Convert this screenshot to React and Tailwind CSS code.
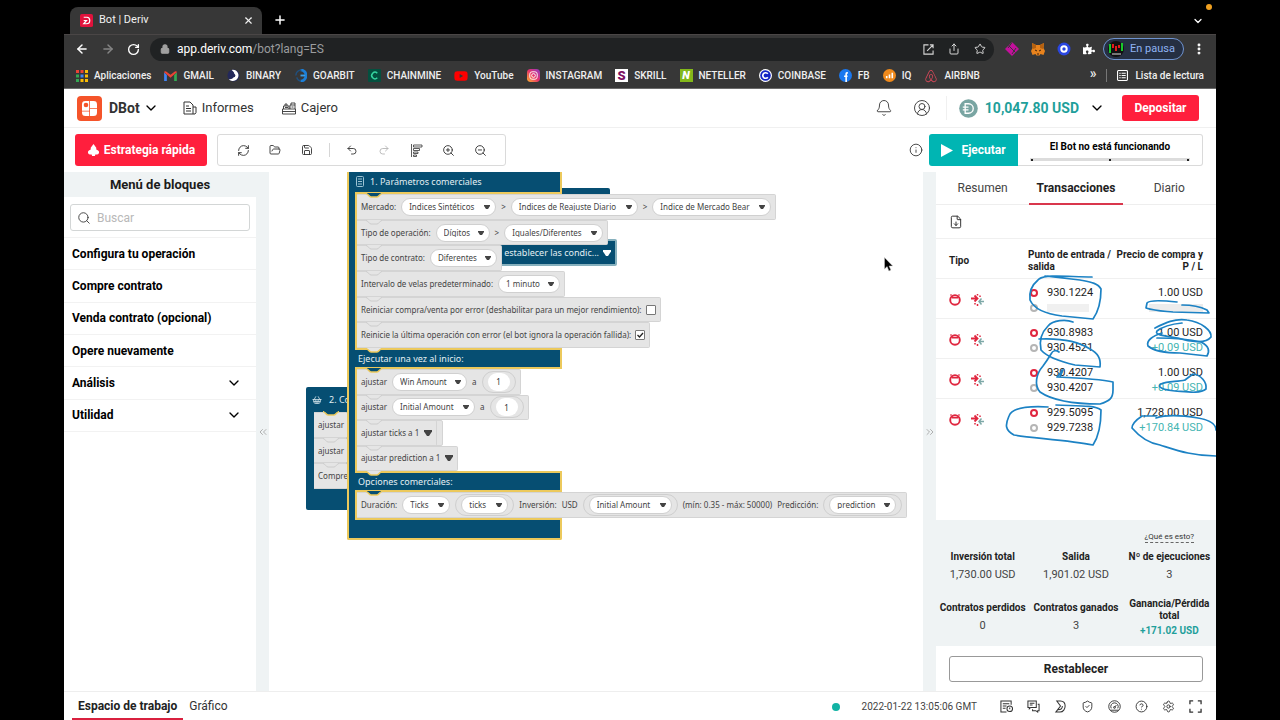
import React from "react";
import {
  ArrowLeft, ArrowRight, RotateCw, Lock, X, Plus, ChevronDown, ChevronsLeft, ChevronsRight,
  Share, Star, EllipsisVertical, Bell, CircleUserRound, Info, Play, RefreshCw, FolderOpen, Save, Undo2, Redo2,
  ZoomIn, ZoomOut, Search, FileDown, ShieldCheck, CircleHelp, Settings, Maximize, ShoppingBasket,
} from "lucide-react";
import { FaPuzzlePiece, FaYoutube, FaAirbnb } from "react-icons/fa";

/* ---------- browser chrome ---------- */

function TabStrip() {
  return (
    <div className="relative flex h-[34px] items-end bg-black pl-[6px]">
      <div className="flex h-[27px] w-[192px] items-center rounded-t-lg bg-[#373737] pl-[10px] pr-2 text-[11px] text-[#f1f1f1]">
        <svg viewBox="0 0 14 14" className="mr-[6px] h-[13px] w-[13px]">
          <rect width="14" height="14" rx="2" fill="#e0123c" />
          <path d="M4 3.500h3.500c2 0 3 1.500 3 3.500s-1.500 3.500-3.500 3.500H4l3-3.500H4" fill="none" stroke="#fff" strokeWidth="1.300" />
        </svg>
        <span className="flex-1">Bot | Deriv</span>
        <button aria-label="Cerrar pestaña"><X className="h-[11px] w-[11px]" strokeWidth={2.5} /></button>
      </div>
      <button aria-label="Nueva pestaña" className="mb-[7px] ml-[11px] text-white"><Plus className="h-[14px] w-[14px]" strokeWidth={2.5} /></button>
      <button aria-label="Buscar pestañas" className="mb-[7px] ml-auto mr-3 text-white"><ChevronDown className="h-3 w-3" strokeWidth={2.5} /></button>
      <span className="absolute right-1 top-1 h-[6px] w-[6px] rounded-full bg-[#f0a020]" />
    </div>
  );
}

function AddressBar() {
  return (
    <div className="flex h-[29px] items-center border-t border-[#4a4646] bg-[#373737] pl-[11px] pr-[10px] text-white">
      <button aria-label="Atrás"><ArrowLeft className="h-[14px] w-[14px]" strokeWidth={2.5} /></button>
      <button aria-label="Adelante" className="ml-3 text-[#858585]"><ArrowRight className="h-[14px] w-[14px]" strokeWidth={2.5} /></button>
      <button aria-label="Recargar" className="ml-3"><RotateCw className="h-[13px] w-[13px]" strokeWidth={2.5} /></button>
      <div className="ml-[10px] flex h-[23px] flex-1 items-center rounded-full bg-[#202223] pl-[10px] pr-2">
        <Lock className="mr-[7px] h-[10px] w-[10px] fill-[#a0a0a0] text-[#a0a0a0]" strokeWidth={2.5} />
        <a href="#url" className="flex-1 text-[12px] text-[#9a9c9e]"><span className="text-white">app.deriv.com</span>/bot?lang=ES</a>
        <div className="flex items-center gap-[14px] text-[#d6d6d6]">
          <button aria-label="Abrir"><svg viewBox="0 0 12 12" className="h-[11px] w-[11px]" fill="none" stroke="currentColor" strokeWidth="1.200"><path d="M6 1H1v10h10V7M7.500 1H11v3.500M11 1 4.500 7.500" /></svg></button>
          <button aria-label="Compartir"><Share className="h-[12px] w-[12px]" /></button>
          <button aria-label="Favorito"><Star className="h-[12px] w-[12px]" /></button>
        </div>
      </div>
      <div className="ml-[11px] flex items-center gap-3">
        <svg viewBox="0 0 14 14" className="h-[14px] w-[14px]"><path d="M7 0l7 7-7 7-7-7z" fill="#c4109c" /><path d="M3.500 3.500l7 7M7 .500 3 6M11 6 7 12" stroke="#373737" strokeWidth="1" /></svg>
        <svg viewBox="0 0 14 14" className="h-[14px] w-[14px]">
          <path d="M1 1l4 2h4l4-2-.500 5L14 9l-1.500 4-3-1-1 1.500h-3L4.500 12l-3 1L0 9l1.500-3z" fill="#e8831d" />
          <path d="M1 1l4 2v3L2 7z" fill="#b5600f" /><path d="M13 1L9 3v3l3 1z" fill="#b5600f" /><path d="M4 8l2 1M10 8 8 9M6 12h2" stroke="#40220a" />
        </svg>
        <svg viewBox="0 0 14 14" className="h-[14px] w-[14px]"><circle cx="7" cy="7" r="6.500" fill="#2a46e0" /><circle cx="7" cy="7" r="2.700" fill="none" stroke="#fff" strokeWidth="2" /></svg>
        <FaPuzzlePiece className="h-3 w-3" />
      </div>
      <button className="ml-2 flex h-[22px] items-center rounded-full border border-[#6f93cf] bg-[#252f42] pl-1 pr-2 text-[11px] text-[#8fb3f2]">
        <svg viewBox="0 0 16 16" className="mr-[6px] h-4 w-4"><circle cx="8" cy="8" r="8" fill="#111" /><path d="M2 3v9M14 2v8" stroke="#18c92a" strokeWidth="2" /><path d="M5 3v4M8 5v5M11 4v3" stroke="#e21b1b" strokeWidth="2" /><path d="M4 13h9" stroke="#ddd" /></svg>
        En pausa
      </button>
      <button aria-label="Menú" className="ml-2"><EllipsisVertical className="h-[14px] w-[14px]" strokeWidth={3} /></button>
    </div>
  );
}

const bookmarks = [
  ["Aplicaciones", <svg viewBox="0 0 12 12" className="h-3 w-3"><path d="M0 0h3v3H0zM4.500 0h3v3h-3z" fill="#ea4335" /><path d="M9 0h3v3H9zM9 4.500h3v3H9z" fill="#fbbc04" /><path d="M0 4.500h3v3H0zM0 9h3v3H0z" fill="#34a853" /><path d="M4.500 4.500h3v3h-3z" fill="#4285f4" /><path d="M4.500 9h3v3h-3zM9 9h3v3H9z" fill="#fbbc04" /></svg>],
  ["GMAIL", <svg viewBox="0 0 14 11" className="h-[10px] w-[13px]"><path d="M0 1.500V11h3V4.500z" fill="#4285f4" /><path d="M14 1.500V11h-3V4.500z" fill="#34a853" /><path d="M0 1.500C0 0 2 0 3 1l4 3 4-3c1-1 3-1 3 .500L7 7.500z" fill="#ea4335" /></svg>],
  ["BINARY", <svg viewBox="0 0 14 14" className="h-[13px] w-[13px]"><circle cx="7" cy="7" r="6.500" fill="#23285a" /><path d="M5 1a6 6 0 1 1-3 10 5 5 0 0 0 6-5C8 3 6 2 5 1z" fill="#fff" /><circle cx="7" cy="7" r="2" fill="#23285a" /></svg>],
  ["GOARBIT", <svg viewBox="0 0 14 14" className="h-[13px] w-[13px]" fill="none"><path d="M7 1a6 6 0 0 1 0 12" stroke="#1c7fd6" strokeWidth="3" /><path d="M8 1a6 6 0 0 0-6 6M3 9a5 5 0 0 0 4 4" stroke="#20507f" strokeWidth="1.500" /><path d="M7 7h5" stroke="#3aa0e8" strokeWidth="2" /></svg>],
  ["CHAINMINE", <svg viewBox="0 0 14 14" className="h-[13px] w-[13px]"><rect width="14" height="14" rx="1" fill="#04503f" /><path d="M10 4.500A3.500 3.500 0 1 0 10 9.500" fill="none" stroke="#35d6a0" strokeWidth="1.600" /></svg>],
  ["YouTube", <FaYoutube className="h-[14px] w-[14px] text-[#f00]" />],
  ["INSTAGRAM", <svg viewBox="0 0 14 14" className="h-[13px] w-[13px]"><defs><linearGradient id="ig" x1="0" y1="1" x2="1" y2="0"><stop offset="0" stopColor="#fdb52e" /><stop offset=".500" stopColor="#e8326a" /><stop offset="1" stopColor="#8a3ac8" /></linearGradient></defs><rect width="14" height="14" rx="4" fill="url(#ig)" /><rect x="3" y="3" width="8" height="8" rx="2.500" fill="none" stroke="#fff" /><circle cx="7" cy="7" r="2" fill="none" stroke="#fff" /></svg>],
  ["SKRILL", <span className="flex h-[13px] w-[13px] items-center justify-center bg-white text-[13px] font-black leading-none text-[#7c0f63]">S</span>],
  ["NETELLER", <span className="flex h-[13px] w-[13px] items-center justify-center bg-[#83b81a] text-[11px] font-black italic leading-none text-white">N</span>],
  ["COINBASE", <svg viewBox="0 0 14 14" className="h-[13px] w-[13px]"><circle cx="7" cy="7" r="7" fill="#fff" /><circle cx="7" cy="7" r="5.700" fill="#1224c4" /><path d="M9.500 5.200A3 3 0 1 0 9.500 8.800" fill="none" stroke="#fff" strokeWidth="1.800" /></svg>],
  ["FB", <svg viewBox="0 0 14 14" className="h-[13px] w-[13px]"><circle cx="7" cy="7" r="7" fill="#1a78f0" /><path d="M9.500 4.200H8.600C8 4.200 7.700 4.600 7.700 5.200V14M5.500 7.800h3.700" fill="none" stroke="#fff" strokeWidth="1.700" /></svg>],
  ["IQ", <svg viewBox="0 0 14 14" className="h-[13px] w-[13px]"><circle cx="7" cy="7" r="7" fill="#f08a1c" /><path d="M4 10V7.500M7 10V6M10 10V4" stroke="#fff" strokeWidth="1.700" /></svg>],
  ["AIRBNB", <FaAirbnb className="h-[14px] w-[14px] text-[#d8485a]" />],
];

function Bookmarks() {
  return (
    <nav className="flex h-[26px] items-center border-b border-[#6b6b6b] bg-[#373737] pl-3 pr-3 text-[10px] font-medium text-[#efefef]">
      <div className="flex items-center gap-[13px]">
        {bookmarks.map(([name, icon]) => (
          <a href="#b" key={name} className="flex items-center gap-[6px] whitespace-nowrap">{icon}{name}</a>
        ))}
      </div>
      <span className="ml-auto pb-[5px] text-[14px] leading-none">»</span>
      <span className="mx-[10px] h-[13px] w-px bg-[#777]" />
      <a href="#l" className="flex items-center gap-[7px] whitespace-nowrap">
        <svg viewBox="0 0 12 12" className="h-[11px] w-[11px]" fill="none" stroke="#fff" strokeWidth="1.200"><rect x=".600" y=".600" width="10.800" height="10.800" rx="1" /><path d="M2.500 3.500h1.500M5 3.500h4.500M2.500 6h1.500M5 6h4.500M2.500 8.500h1.500M5 8.500h4.500" /></svg>
        Lista de lectura
      </a>
    </nav>
  );
}

/* ---------- app header ---------- */

function Header() {
  return (
    <header className="flex h-[39px] items-center border-b border-[#f0f0f0] pl-[13px] pr-[17px] text-[#333]">
      <button className="flex items-center text-[14px] font-bold">
        <svg viewBox="0 0 25 25" className="mr-[7px] h-[25px] w-[25px]">
          <rect width="25" height="25" rx="4" fill="#f5542a" />
          <path d="M8.500 5h3.700v9.700H5V8.500C5 6 6 5 8.500 5zM13 5h3.500C19 5 20 6 20 8.500v3.700h-7zM13 13h7v3.500c0 2.500-1 3.500-3.500 3.500H13zM5 15.500h7.200V20H8.500C6 20 5 19 5 16.500z" fill="#fff" />
          <circle cx="9" cy="9" r="2.300" fill="#f5542a" />
        </svg>
        DBot
        <ChevronDown className="ml-[3px] h-4 w-4 text-black" />
      </button>
      <a href="#i" className="ml-6 flex items-center gap-[5px] text-[13px]">
        <svg viewBox="0 0 14 14" className="h-[14px] w-[14px]" fill="none" stroke="currentColor"><path d="M1 1h6l3 3v9H1zM10 6h3v5.500L12 13h-2M3 5h3M3 7.500h5M3 10h5" /></svg>
        Informes
      </a>
      <a href="#c" className="ml-7 flex items-center gap-[5px] text-[13px]">
        <svg viewBox="0 0 14 14" className="h-[14px] w-[14px]" fill="none" stroke="currentColor"><path d="M.500 8h13v5H.500zM1.500 8V5h5.500v3M8 8V4h5v4M9 4V2h4v2M3 5V3h2v2M.500 10.500h13M3 6.500h3M9.500 6h2" strokeWidth=".900" /></svg>
        Cajero
      </a>
      <div className="ml-auto flex items-center">
        <button aria-label="Notificaciones"><Bell className="h-[18px] w-[18px] text-[#444]" strokeWidth={1.3} /></button>
        <button aria-label="Cuenta" className="ml-5"><CircleUserRound className="h-[18px] w-[18px] text-[#444]" strokeWidth={1.3} /></button>
        <span className="ml-[15px] h-6 w-px bg-[#f0f0f0]" />
        <button className="ml-3 flex items-center text-[14px] font-bold text-[#1f9f9b]">
          <svg viewBox="0 0 20 20" className="mr-[7px] h-[19px] w-[19px]"><circle cx="10" cy="10" r="9.800" fill="#79a5a2" /><path d="M6.500 5H10a5 5 0 0 1 0 10H6.500zM4 8.500h6M4 11.500h6" fill="none" stroke="#fff" strokeWidth="1.400" /></svg>
          10,047.80 USD
          <ChevronDown className="ml-[10px] h-4 w-4 text-black" />
        </button>
        <button className="ml-[17px] h-[26px] w-[77px] rounded-[3px] bg-[#ff1f3d] text-[12px] font-bold text-white">Depositar</button>
      </div>
    </header>
  );
}

function ToolBtn({ label, children, muted }) {
  return <button aria-label={label} className={"flex w-8 justify-center " + (muted ? "text-[#b5b5b5]" : "text-[#333]")}>{children}</button>;
}

function Toolbar() {
  const ic = "h-[13px] w-[13px]";
  return (
    <div className="flex h-[44px] items-center pl-[11px] pr-[13px]">
      <button className="flex h-8 w-[132px] items-center justify-center gap-1 rounded-[3px] bg-[#ff1f3d] text-[12px] font-bold text-white">
        <svg viewBox="0 0 14 13" className="h-3 w-[13px]" fill="#fff"><path d="M7 0l3 4v2l2 1a2.500 2.500 0 0 1-1 4.500H9L8.500 13h-3L5 11.500H3A2.500 2.500 0 0 1 2 7l2-1V4z" /></svg>
        Estrategia rápida
      </button>
      <div className="ml-[10px] flex h-8 items-center rounded-[3px] border border-[#dadada] px-[9px]">
        <ToolBtn label="Reiniciar"><RefreshCw className={ic} strokeWidth={1.7} /></ToolBtn>
        <ToolBtn label="Importar"><FolderOpen className="h-3 w-3" strokeWidth={1.8} /></ToolBtn>
        <ToolBtn label="Guardar"><Save className="h-3 w-3" strokeWidth={1.8} /></ToolBtn>
        <span className="mx-[6px] h-[14px] w-px bg-[#d6d6d6]" />
        <ToolBtn label="Deshacer"><Undo2 className="h-3 w-3" strokeWidth={1.8} /></ToolBtn>
        <ToolBtn label="Rehacer" muted><Redo2 className="h-3 w-3" strokeWidth={1.8} /></ToolBtn>
        <ToolBtn label="Ordenar"><svg viewBox="0 0 13 13" className={ic} fill="none" stroke="currentColor" strokeWidth=".800"><path d="M1.500 0v13M3.500 1h8.500v2H3.500zM3.500 4.500h6v2h-6zM3.500 8h4.500v1.500H3.500zM3.500 11h3v1.500h-3z" /></svg></ToolBtn>
        <ToolBtn label="Acercar"><ZoomIn className={ic} strokeWidth={1.7} /></ToolBtn>
        <ToolBtn label="Alejar"><ZoomOut className={ic} strokeWidth={1.7} /></ToolBtn>
      </div>
      <button aria-label="Información" className="ml-auto mr-[6px]"><Info className="h-[14px] w-[14px] text-[#333]" strokeWidth={1.5} /></button>
      <button className="flex h-8 w-[89px] items-center justify-center gap-2 rounded-l-[3px] bg-[#00b5b3] text-[12px] font-bold text-white">
        <svg viewBox="0 0 12 13" className="h-[13px] w-3"><path d="M0 0l12 6.500L0 13z" fill="#fff" /></svg>Ejecutar
      </button>
      <div className="flex h-8 w-[185px] flex-col items-center rounded-r-[3px] border border-l-0 border-[#dadada] px-3 pt-[5px]">
        <span className="text-[10px] font-bold leading-[13px] text-black">El Bot no está funcionando</span>
        <div className="mt-[5px] flex h-[3px] w-full items-center justify-between bg-[#dcdcdc] px-px">
          <i className="h-[2px] w-[2px] bg-[#222]" /><i className="h-[2px] w-[2px] bg-[#222]" /><i className="h-[2px] w-[2px] bg-[#222]" />
        </div>
      </div>
    </div>
  );
}

/* ---------- toolbox ---------- */

const categories = [
  ["Configura tu operación", false], ["Compre contrato", false], ["Venda contrato (opcional)", false],
  ["Opere nuevamente", false], ["Análisis", true], ["Utilidad", true],
];

function Sidebar() {
  return (
    <aside className="w-48 shrink-0">
      <h2 className="flex h-[25px] items-center justify-center bg-[#eff3f4] text-[13px] font-bold text-[#1c1c1c]">Menú de bloques</h2>
      <div className="px-[6px] pb-[6px] pt-[7px]">
        <label className="flex h-[27px] items-center rounded-[3px] border border-[#d3d6d6] px-[6px]">
          <Search className="h-[14px] w-[14px] shrink-0 text-[#333]" strokeWidth={1.5} />
          <input aria-label="Buscar" placeholder="Buscar" className="ml-[6px] w-full text-[12px] outline-none placeholder:text-[#b8b8b8]" />
        </label>
      </div>
      <ul className="flex h-[195px] flex-col border-t border-[#f2f2f2]">
        {categories.map(([name, open]) => (
          <li key={name} className="flex flex-1 border-b border-[#f2f2f2]">
            <button className="flex w-full items-center justify-between pl-2 pr-[14px] text-[12px] font-bold text-black">
              {name}{open && <ChevronDown className="h-4 w-4" />}
            </button>
          </li>
        ))}
      </ul>
    </aside>
  );
}

/* ---------- workspace blocks ---------- */

function Notch({ fill = "#e5e5e5", stroke = "#cccccc", width = "1", place = "-top-px left-2" }) {
  return (
    <svg viewBox="0 0 18 6" className={"absolute h-[6px] w-[18px] " + place} fill={fill} stroke={stroke} strokeWidth={width}>
      <path d="M1 .500c2 0 3 3.500 5 3.500h6c2 0 3-3.500 5-3.500" />
      <path d="M2.500 0h13" stroke={fill} strokeWidth="2" />
    </svg>
  );
}
const topNotch = <Notch fill="#064e72" stroke="#ecc95c" width="1.500" place="-top-[2px] left-2" />;
const barNotch = <Notch stroke="#ecc95c" width="1.500" place="-top-[2px] left-[10px]" />;
const plainNotch = <Notch />;

function Row({ children, top, size = "w-max pr-1" }) {
  return (
    <div className={"relative flex flex-1 items-center gap-[5px] whitespace-nowrap rounded-r-[2px] border-y border-r border-[#d4d4d4] bg-[#e5e5e5] pl-1 text-[8px] leading-none text-[#444] " + size}>
      {top ? topNotch : plainNotch}
      {children}
    </div>
  );
}

function Pill({ value, label, width }) {
  return (
    <span className={"relative flex h-[18px] shrink-0 " + width}>
      <select aria-label={label} defaultValue={value} className="w-full appearance-none rounded-full border border-[#d0d0d0] bg-white pl-[7px] text-[8px] text-[#444]">
        <option>{value}</option>
      </select>
      <svg viewBox="0 0 6 4" className="pointer-events-none absolute right-[6px] top-[7px] h-1 w-[6px]"><path d="M0 0h6v1L4 4H2L0 1z" fill="#444" /></svg>
    </span>
  );
}

function Slot({ children }) {
  return <span className="flex h-[22px] items-center rounded-full border border-[#cfcfcf] px-[5px]">{children}</span>;
}

function Amount({ label }) {
  return <Slot><input aria-label={label} defaultValue="1" className="h-[18px] w-[22px] rounded-full bg-white text-center text-[8px] text-[#333]" /></Slot>;
}

function Check({ text, checked }) {
  return (
    <label className="flex items-center gap-1">
      {text}
      <span className="relative h-[10px] w-[10px]">
        <input type="checkbox" defaultChecked={checked} className="peer block h-[10px] w-[10px] appearance-none rounded-[1px] border border-[#777] bg-white" />
        <svg viewBox="0 0 10 10" className="pointer-events-none absolute inset-0 hidden h-[10px] w-[10px] peer-checked:block"><path d="M2.500 5l2 2 3.500-4" fill="none" stroke="#222" strokeWidth="1.300" /></svg>
      </span>
    </label>
  );
}

function Caret({ color }) {
  return <svg viewBox="0 0 8 6" className="h-[6px] w-2 shrink-0"><path d="M0 0h8v1.500L5 6H3L0 1.500z" fill={color} /></svg>;
}

function Workspace() {
  const bar = "relative flex w-[207px] items-center border-r-2 border-[#ecc95c] bg-[#064e72] text-[9px] leading-none text-[#e3eef3]";
  return (
    <main className="relative min-w-0 flex-1 overflow-hidden bg-white font-['Noto_Sans',sans-serif]">
      {/* partly covered blocks */}
      <div className="absolute left-[200px] top-4 h-7 w-[141px] rounded-[2px] bg-[#064e72]" />
      <div className="absolute left-[210px] top-[67px] flex h-[27px] w-[138px] items-center justify-end gap-1 whitespace-nowrap rounded-[2px] border-2 border-[#86b0bd] bg-[#064e72] pr-1 text-[9px] text-[#e3eef3]">
        establecer las condic... <Caret color="#fff" />
      </div>
      <div className="absolute left-[160px] top-[248px] h-[26px] w-[14px] rounded-[2px] border border-[#d4d4d4] bg-[#e5e5e5]" />
      <div className="absolute left-[37px] top-[215px] h-[123px] w-[42px] overflow-hidden rounded-l-[2px] bg-[#064e72] text-[#e3eef3]">
        <div className="flex h-[25px] items-center gap-[7px] whitespace-nowrap pl-[6px] text-[9px]">
          <ShoppingBasket className="h-[10px] w-[10px] shrink-0" strokeWidth={1.8} />2. Co
        </div>
        <div className="ml-2 flex h-[77px] flex-col">
          <Row top size="w-full">ajustar</Row><Row size="w-full">ajustar</Row><Row size="w-full">Compre</Row>
        </div>
      </div>

      <div className="absolute left-[78px] top-0 flex">
        <div className="w-2 rounded-bl-[2px] border-b-2 border-l-2 border-[#ecc95c] bg-[#064e72]" />
        <div>
          <div className={bar + " h-[22px] border-b-2 pb-[2px] pl-px"}>
            <svg viewBox="0 0 8 11" className="mr-[6px] h-[11px] w-2" fill="none" stroke="#9cc3d3"><rect x=".500" y=".500" width="7" height="10" rx="1" /><path d="M2 3h4M2 5.500h4M2 8h4" /></svg>
            1. Parámetros comerciales
          </div>
          <div className="flex h-[154px] flex-col border-l-2 border-[#ecc95c]">
            <Row top>
              Mercado:
              <Pill label="Mercado" value="Índices Sintéticos" width="w-[95px]" />&gt;
              <Pill label="Submercado" value="Índices de Reajuste Diario" width="w-[127px]" />&gt;
              <Pill label="Símbolo" value="Índice de Mercado Bear" width="w-[119px]" />
            </Row>
            <Row>
              Tipo de operación:
              <Pill label="Categoría" value="Dígitos" width="w-[54px]" />&gt;
              <Pill label="Tipo" value="Iguales/Diferentes" width="w-[99px]" />
            </Row>
            <Row>Tipo de contrato: <Pill label="Contrato" value="Diferentes" width="w-[67px]" /></Row>
            <Row>Intervalo de velas predeterminado: <Pill label="Intervalo" value="1 minuto" width="w-[62px]" /></Row>
            <Row><Check text="Reiniciar compra/venta por error (deshabilitar para un mejor rendimiento):" /></Row>
            <Row><Check checked text="Reinicie la última operación con error (el bot ignora la operación fallida):" /></Row>
          </div>
          <div className={bar + " h-[21px] border-y-2 pl-[3px]"}>{barNotch}Ejecutar una vez al inicio:</div>
          <div className="flex h-[102px] flex-col border-l-2 border-[#ecc95c]">
            <Row top>ajustar <Pill label="Variable 1" value="Win Amount" width="w-[75px]" />a <Amount label="Win Amount" /></Row>
            <Row>ajustar <Pill label="Variable 2" value="Initial Amount" width="w-[83px]" />a <Amount label="Initial Amount" /></Row>
            <Row>ajustar ticks a 1 <Caret color="#444" /></Row>
            <Row>ajustar prediction a 1 <Caret color="#444" /></Row>
          </div>
          <div className={bar + " h-[21px] border-y-2 pl-[3px]"}>{barNotch}Opciones comerciales:</div>
          <div className="flex h-[26px] flex-col border-l-2 border-[#ecc95c]">
            <Row top>
              Duración:
              <Pill label="Duración" value="Ticks" width="w-[48px]" />
              <Slot><Pill label="Unidades" value="ticks" width="w-[47px]" /></Slot>
              <span>Inversión:</span><span>USD</span>
              <Slot><Pill label="Inversión" value="Initial Amount" width="w-[83px]" /></Slot>
              <span>(mín: 0.35 - máx: 50000)</span><span>Predicción:</span>
              <Slot><Pill label="Predicción" value="prediction" width="w-[67px]" /></Slot>
            </Row>
          </div>
          <div className={bar + " h-[22px] rounded-br-[2px] border-y-2"} />
        </div>
      </div>

      <svg viewBox="0 0 10 15" className="absolute left-[615px] top-[85px] h-[15px] w-[10px]"><path d="M.500.500v11.500l2.600-2.400 1.800 4.400 2-.900-1.800-4.100h3.600z" fill="#000" stroke="#ccc" strokeWidth=".500" /></svg>
    </main>
  );
}

/* ---------- run panel ---------- */

const trades = [
  ["930.1224", null, "1.00 USD", null],
  ["930.8983", "930.4521", "1.00 USD", "+0.09 USD"],
  ["930.4207", "930.4207", "1.00 USD", "+0.09 USD"],
  ["929.5095", "929.7238", "1,728.00 USD", "+170.84 USD"],
];

const strokes = [
  "M1038 280C1032 285 1029 292 1030 300C1034 309 1046 314 1062 316L1093 319C1098 312 1101 302 1101 289C1098 283 1090 282 1080 280L1045 276M1039 279C1046 274 1070 277 1092 277",
  "M1177 302C1168 301 1150 299 1147 303L1146 308C1155 311 1162 311 1173 312L1209 313L1207 310C1201 307 1192 305 1182 305",
  "M1073 322C1066 319 1053 320 1048 326C1042 332 1039 341 1041 350C1048 358 1062 362 1075 365L1100 367C1101 360 1098 353 1090 349C1078 341 1062 338 1039 339",
  "M1059 352C1056 350 1053 350 1051 354C1048 359 1046 362 1043 366C1036 374 1034 385 1040 392C1053 401 1075 404 1100 404C1110 401 1113 398 1113 390L1113 382C1100 379 1080 378 1057 377L1063 370L1060 377L1062 370",
  "M1048 407C1030 406 1012 407 1009 416C1005 425 1005 430 1014 435C1030 438 1070 440 1093 445C1099 436 1101 425 1101 410C1095 405 1075 406 1056 405",
  "M1155 328C1165 323 1175 318 1187 320C1202 322 1212 331 1211 337C1206 344 1190 342 1178 338C1165 336 1154 335 1157 331C1162 327 1172 324 1182 323",
  "M1162 333C1152 336 1146 341 1148 346C1154 351 1165 353 1180 353L1207 356C1210 351 1209 346 1201 342C1188 339 1172 338 1157 338",
  "M1185 380L1193 374C1201 375 1207 382 1206 389C1200 394 1188 392 1175 391C1164 390 1156 387 1161 384C1168 381 1177 382 1185 380",
  "M1156 418C1168 414 1186 416 1198 418C1210 420 1216 424 1216 430M1156 416H1142C1136 420 1132 425 1132 428C1138 435 1148 443 1160 445C1176 450 1192 456 1216 456",
];

function Dot({ color }) {
  return <span className={"h-2 w-2 shrink-0 rounded-full border-2 " + color} />;
}

function TradeTable() {
  return (
    <table className="w-full table-fixed text-[10px] text-[#1e1e1e]">
      <thead>
        <tr className="h-[39px] border-b border-[#f0f0f0] align-middle leading-3">
          <th className="w-[92px] pl-[13px] pt-[6px] text-left">Tipo</th>
          <th className="w-[86px] whitespace-nowrap pt-[6px] text-left">Punto de entrada /<br />salida</th>
          <th className="whitespace-nowrap pr-[13px] pt-[6px] text-right">Precio de compra y<br />P / L</th>
        </tr>
      </thead>
      <tbody>
        {trades.map(([entry, exit, price, pl], i) => (
          <tr key={i} className="h-10 border-b border-[#f0f0f0] last:border-0">
            <td className="pl-[13px] pt-1">
              <span className="flex items-center gap-[10px]">
                <svg viewBox="0 0 12 12" className="h-3 w-3"><circle cx="6" cy="6" r="4.800" fill="none" stroke="#e0263f" strokeWidth="1.900" /><path d="M3 3h6v1.500H3z" fill="#e0263f" /><path d="M2 0v2M10 0v2" stroke="#e0263f" /></svg>
                <svg viewBox="0 0 13 12" className="h-3 w-[13px]" fill="none"><path d="M0 4.500h6M3.500 1.500 6.500 4.500 3.500 7.500" stroke="#e0263f" strokeWidth="1.800" /><path d="M13 7.500H8M10.500 4.500 8 7.500l2.500 3" stroke="#7ea9a8" strokeWidth="1.500" /><path d="M6.500 0v1.500M6.500 10v2M9 1.500V3M4 9v1.500" stroke="#e0263f" strokeWidth="1.500" /></svg>
              </span>
            </td>
            <td className="pt-1 text-[11px] leading-[15px]">
              <div className="flex h-[15px] items-center gap-[9px] pl-[2px]"><Dot color="border-[#e0263f]" />{entry}</div>
              <div className="flex h-[15px] items-center gap-[9px] pl-[2px]"><Dot color="border-[#b5b5b5]" />{exit || <span className="h-2 w-[42px] bg-[#f0f0f0]" />}</div>
            </td>
            <td className="pr-[13px] pt-1 text-right text-[11px] leading-[15px]">
              <div className="h-[15px]">{price}</div>
              <div className="flex h-[15px] items-center justify-end text-[#45b5b2]">{pl || <span className="h-2 w-[54px] bg-[#ececec]" />}</div>
            </td>
          </tr>
        ))}
      </tbody>
    </table>
  );
}

function Stat({ title, value, gain }) {
  return (
    <div className="flex flex-col items-center justify-center text-center">
      <dt className="whitespace-nowrap text-[10px] font-bold leading-3 text-[#222]">{title}</dt>
      <dd className={gain ? "mt-[3px] text-[10px] font-bold leading-3 text-[#1f9f9b]" : "mt-[5px] text-[11px] leading-[14px] text-[#444]"}>{value}</dd>
    </div>
  );
}

function RunPanel() {
  return (
    <aside className="relative flex w-[280px] shrink-0 flex-col bg-white">
      <div className="flex h-[33px] border-b border-[#eeeeee] text-[12px] text-[#444]">
        <button className="flex-1">Resumen</button>
        <button className="-mb-px flex-1 border-b-2 border-[#d9364c] font-bold text-[#222]">Transacciones</button>
        <button className="flex-1">Diario</button>
      </div>
      <div className="flex h-[34px] items-center border-b border-[#f0f0f0] pl-[13px]">
        <button aria-label="Descargar"><FileDown className="h-[14px] w-[14px] text-[#333]" strokeWidth={1.7} /></button>
      </div>
      <TradeTable />
      <section className="mt-auto h-[126px] bg-[#eff3f4] pt-3">
        <div className="grid grid-cols-3 justify-items-center"><a href="#q" className="col-start-3 border-b border-dashed border-[#666] text-[8px] leading-[10px] text-[#333]">¿Qué es esto?</a></div>
        <dl className="mt-2 grid grid-cols-3 gap-y-4">
          <Stat title="Inversión total" value="1,730.00 USD" />
          <Stat title="Salida" value="1,901.02 USD" />
          <Stat title="Nº de ejecuciones" value="3" />
          <Stat title="Contratos perdidos" value="0" />
          <Stat title="Contratos ganados" value="3" />
          <Stat title={<>Ganancia/Pérdida<br />total</>} value="+171.02 USD" gain />
        </dl>
      </section>
      <div className="px-[13px] pb-[9px] pt-[10px]">
        <button className="h-[26px] w-full rounded-[3px] border border-[#999] text-[12px] font-bold text-[#222]">Restablecer</button>
      </div>
      <svg viewBox="936 172 280 519" className="pointer-events-none absolute left-0 top-0 h-[519px] w-[280px]" fill="none" stroke="#1c82c4" strokeWidth="1.700" strokeLinecap="round" strokeLinejoin="round">
        {strokes.map((d) => <path key={d} d={d} />)}
      </svg>
    </aside>
  );
}

function Gutter({ children, label }) {
  return <button aria-label={label} className="flex w-[13px] shrink-0 items-center justify-center bg-[#eff3f4] text-[#999]">{children}</button>;
}

function FooterBtn({ label, children }) {
  return <button aria-label={label} className="flex w-[27px] justify-center">{children}</button>;
}

function Footer() {
  const ic = "h-[13px] w-[13px]";
  return (
    <footer className="flex h-[29px] items-stretch border-t border-[#eeeeee] bg-white pl-2 pr-[7px] text-[12px] text-[#333]">
      <button className="border-b-2 border-[#d9203f] px-[6px] pt-[2px] font-bold text-[#222]">Espacio de trabajo</button>
      <button className="border-b-2 border-transparent px-[6px] pt-[2px]">Gráfico</button>
      <div className="ml-auto flex items-center pt-px">
        <span className="mr-[22px] h-2 w-2 rounded-full bg-[#12b3a4]" />
        <span className="mr-4 text-[10px] text-[#444]">2022-01-22 13:05:06 GMT</span>
        <FooterBtn label="Registro"><svg viewBox="0 0 14 14" className={ic} fill="none" stroke="currentColor" strokeWidth="1.100"><path d="M12 5V1H1v12h6M3 4h7M3 6.500h4M3 9h3" /><circle cx="10.500" cy="9.500" r="3" /><path d="M10.500 8v2" /></svg></FooterBtn>
        <FooterBtn label="Chat"><svg viewBox="0 0 14 14" className={ic} fill="none" stroke="currentColor" strokeWidth="1.100"><path d="M1 1h9v7H4L2.500 9.500V8H1zM11.500 4.500H13v7h-1.500V13L9.500 11.500H6V10M3 3.500h5M3 5.500h3" /></svg></FooterBtn>
        <FooterBtn label="Deriv"><svg viewBox="0 0 14 14" className={ic} fill="none" stroke="currentColor" strokeWidth="1.100"><path d="M3 1h4c3.500 0 5 2.500 5 5.500S10 13 6.500 13H2l5-6.500zM4.500 10.500C7 10.500 9 9 9 6.500" /></svg></FooterBtn>
        <FooterBtn label="Juego responsable"><ShieldCheck className={ic} strokeWidth={1.7} /></FooterBtn>
        <FooterBtn label="Límites"><svg viewBox="0 0 14 14" className={ic} fill="none" stroke="currentColor"><circle cx="7" cy="7" r="6.200" /><path d="M3.500 9A4 4 0 1 1 10.500 9M2.500 11h9M7 8l2-2.500" /><circle cx="7" cy="8" r="1" /></svg></FooterBtn>
        <FooterBtn label="Ayuda"><CircleHelp className={ic} strokeWidth={1.7} /></FooterBtn>
        <FooterBtn label="Configuración"><Settings className={ic} strokeWidth={1.7} /></FooterBtn>
        <FooterBtn label="Pantalla completa"><svg viewBox="0 0 14 14" className={ic} fill="none" stroke="currentColor" strokeWidth="1.400"><path d="M1 4.500V1h3.500M9.500 1H13v3.500M13 9.500V13H9.500M4.500 13H1V9.500" /></svg></FooterBtn>
      </div>
    </footer>
  );
}

export default function App() {
  return (
    <div className="min-h-screen bg-black px-[5%] font-['Roboto',sans-serif]">
      <div className="flex h-screen flex-col bg-white">
        <TabStrip />
        <AddressBar />
        <Bookmarks />
        <Header />
        <Toolbar />
        <div className="flex min-h-0 flex-1">
          <Sidebar />
          <Gutter label="Contraer menú"><ChevronsLeft className="h-3 w-3" strokeWidth={1.5} /></Gutter>
          <Workspace />
          <Gutter label="Contraer panel"><ChevronsRight className="h-3 w-3" strokeWidth={1.5} /></Gutter>
          <RunPanel />
        </div>
        <Footer />
      </div>
    </div>
  );
}
